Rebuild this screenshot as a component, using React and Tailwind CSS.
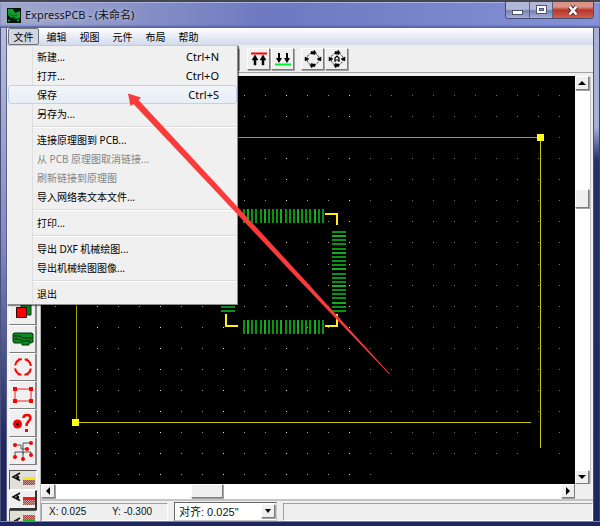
import React from "react";

const uiFont = "font-['Noto_Sans','Noto_Sans_CJK_SC',sans-serif]";

const menuNames = ["编辑", "视图", "元件", "布局", "帮助"];

const fileMenu = [
  { label: "新建...", keys: "Ctrl+N" },
  { label: "打开...", keys: "Ctrl+O" },
  { label: "保存", keys: "Ctrl+S", active: true },
  { label: "另存为..." },
  null,
  { label: "连接原理图到 PCB..." },
  { label: "从 PCB 原理图取消链接...", disabled: true },
  { label: "刷新链接到原理图", disabled: true },
  { label: "导入网络表文本文件..." },
  null,
  { label: "打印..." },
  null,
  { label: "导出 DXF 机械绘图..." },
  { label: "导出机械绘图图像..." },
  null,
  { label: "退出" },
];

function TitleBar() {
  return (
    <header className="flex h-7 shrink-0 items-start justify-between border-t-2 border-[#45464e] bg-linear-to-r from-[#a3a9cc] via-[#6d79c0] via-45% to-[#8592d6] pl-[7px] shadow-[inset_0_1px_0_#a9b2de,inset_0_-2px_2px_#5662a8]">
      <div className="flex items-center gap-1 pt-[5px]">
        <svg width="14" height="15" viewBox="0 0 14 15" aria-hidden="true">
          <rect width="14" height="15" fill="#04150a" />
          <path d="M1 1h5l2 4 5-2v7l-4 1-2-2-3 1-3-3z" fill="#12a02c" />
          <path d="M2 5l4 3 4-1M3 9l4 2h6" stroke="#0a5c1b" fill="none" />
          <circle cx="2" cy="12.500" r="1" fill="#18b636" />
          <circle cx="11" cy="12.500" r="1" fill="#18b636" />
        </svg>
        <h1 className="text-[11px] leading-4 text-[#10101c] [text-shadow:0_0_5px_#ffffffb0]">
          ExpressPCB - (未命名)
        </h1>
      </div>
      <div className="mr-[6px] flex h-[17px] overflow-hidden rounded-b border border-t-0 border-[#474c72]">
        <button aria-label="最小化" className="flex w-6 items-center justify-center border-r border-[#5a608c] bg-linear-to-b from-[#b2b7d8] from-45% via-[#7a81ae] via-55% to-[#a4addb]">
          <svg width="11" height="12"><rect x="0.5" y="6.5" width="10" height="4" fill="#fff" stroke="#50546e" /></svg>
        </button>
        <button aria-label="最大化" className="flex w-[23px] items-center justify-center border-r border-[#5a608c] bg-linear-to-b from-[#b2b7d8] from-45% via-[#7a81ae] via-55% to-[#a4addb]">
          <svg width="11" height="10"><rect x="0.5" y="0.5" width="10" height="8" fill="#fff" stroke="#50546e" /><rect x="3.5" y="3.5" width="4" height="2" fill="#8d93b8" stroke="#50546e" /></svg>
        </button>
        <button aria-label="关闭" className="flex w-10 items-center justify-center bg-linear-to-b from-[#d99488] from-30% via-[#b5352a] via-50% to-[#d0604c]">
          <svg width="12" height="11" viewBox="0 0 12 11"><path d="M2.5 1.5l7 8M9.500 1.500l-7 8" stroke="#5b3038" strokeWidth="4.500" /><path d="M2.500 1.500l7 8M9.500 1.500l-7 8" stroke="#fff" strokeWidth="2.500" /></svg>
        </button>
      </div>
    </header>
  );
}

function FileMenu() {
  return (
    <div role="menu" className="absolute top-[17px] left-0 z-20 w-[231px] border border-[#8d8d8d] border-t-[#c9c9c9] border-l-[#f4f4f4] bg-[#f0f0f0] py-px shadow-[1px_1px_1px_#00000070]">
      <div className="absolute inset-y-px left-6 w-px bg-[#dfdfe2]" />
      {fileMenu.map((item, i) =>
        item === null ? (
          <div key={i} role="separator" className="flex h-[7px] items-center pl-6">
            <div className="h-[2px] w-full border-b border-white bg-[#dcdcdc]" />
          </div>
        ) : (
          <button
            key={i}
            role="menuitem"
            disabled={item.disabled}
            className={
              "relative flex h-[19px] w-full items-center justify-between border pr-[17px] pl-7 text-[10px] leading-4 " +
              (item.active
                ? "rounded-[3px] border-[#b9d4ee] bg-linear-to-b from-[#f2f5f9] to-[#e6eef7] text-black"
                : item.disabled
                  ? "border-transparent text-[#858585]"
                  : "border-transparent text-black")
            }
          >
            <span>{item.label}</span>
            {item.keys && <span className="text-[11px]">{item.keys}</span>}
          </button>
        ),
      )}
    </div>
  );
}

function MenuBar() {
  return (
    <nav className="relative flex h-[17px] shrink-0 bg-linear-to-b from-white to-[#d2daec] text-[10px] leading-4 text-black">
      <button className="mx-px w-[31px] rounded-[2px] border border-[#6f737c] bg-[#d3d6dc] leading-[14px]">文件</button>
      {menuNames.map((name) => (
        <button key={name} className="w-[33px]">{name}</button>
      ))}
      <FileMenu />
    </nav>
  );
}

const raised = "border border-white border-r-[#7d7d7d] border-b-[#7d7d7d] bg-[#efefef] shadow-[1px_1px_0_#a5a5a5]";

function ToolButton({ label, children }) {
  return (
    <button aria-label={label} className={"flex h-[22px] w-[23px] items-center justify-center " + raised}>
      {children}
    </button>
  );
}

function Target({ auto }) {
  return (
    <svg width="18" height="18" viewBox="0 0 18 18" aria-hidden="true">
      <circle cx="9" cy="9" r="6" fill="none" stroke="#222" strokeDasharray="2 1" />
      <path d="M7 1.500h3V0l2 2.500L10 5V4H7zM11 16.500H8V18l-2-2.500L8 13v1h3zM1 7l4 2-4 2zM17 7l-4 2 4 2z" fill="#000" stroke="#000" strokeWidth="0.500" />
      {auto && <path d="M7 12V8l2-2 2 2v4M7 10h4" fill="none" stroke="#000" strokeWidth="1.200" />}
    </svg>
  );
}

function ToolBar() {
  return (
    <div className="flex h-7 shrink-0 items-start border-b border-[#a2a2a2] bg-[#efefef] pt-[3px]">
      <div className={"mr-2 ml-2 h-[22px] w-[224px] " + raised} />
      <div className="flex gap-px">
        <ToolButton label="顶层">
          <svg width="16" height="14"><path d="M0 1.500h16" stroke="#f00" strokeWidth="2" /><path d="M1 8l3-5 3 5H5v5H3V8zM9 8l3-5 3 5h-2v5h-2V8z" fill="#000" stroke="#000" strokeWidth="0.500" /></svg>
        </ToolButton>
        <ToolButton label="底层">
          <svg width="16" height="14"><path d="M0 12.500h16" stroke="#00f22a" strokeWidth="2" /><path d="M1 6l3 5 3-5H5V1H3v5zM9 6l3 5 3-5h-2V1h-2v5z" fill="#000" /></svg>
        </ToolButton>
      </div>
      <div className="ml-[7px] flex gap-px">
        <ToolButton label="旋转"><Target /></ToolButton>
        <ToolButton label="自动旋转"><Target auto /></ToolButton>
      </div>
    </div>
  );
}

const sideTools = [
  ["焊盘", <svg key="a" width="22" height="24" viewBox="0 0 22 24"><path d="M9 4h10v12H9z" fill="#078018" stroke="#042" /><path d="M4.500 8.500h10v10h-10z" fill="#f00" stroke="#300" /></svg>],
  ["覆铜", <svg key="b" width="22" height="14" viewBox="0 0 22 14"><path d="M2 1h18l1 1v8l-2 1h-2v2h-7v-2H2l-1-2V2z" fill="#0a8a1d" stroke="#052e0a" /><path d="M2 4h6l2 2h10M2 7h5l3 2h9" fill="none" stroke="#052e0a" /></svg>],
  ["圆弧", <svg key="c" width="20" height="20" viewBox="0 0 20 20"><circle cx="10" cy="10" r="8" fill="none" stroke="#f00" strokeWidth="2" strokeDasharray="9.566 3" strokeDashoffset="-1.500" /><path d="M6 1l-2 4M14 1l2 4M6 19l-2-4M14 19l2-4" stroke="#f00" strokeWidth="0.700" /></svg>],
  ["矩形", <svg key="d" width="22" height="18" viewBox="0 0 22 18"><path d="M3 3h16v12H3z" fill="none" stroke="#e22" /><path d="M1 1h4v4H1zM17 1h4v4h-4zM1 13h4v4H1zM17 13h4v4h-4z" fill="#f00" /></svg>],
  ["信息", <svg key="e" width="22" height="20" viewBox="0 0 22 20"><circle cx="5.500" cy="11" r="4.500" fill="#f00" /><circle cx="5.500" cy="11" r="1.500" fill="#000" /><path d="M11.500 5c0-4 7-4 7 0 0 3-4 3-4 8" fill="none" stroke="#f00" strokeWidth="2.500" /><rect x="13" y="16" width="3" height="3" fill="#f00" /></svg>],
  ["网络", <svg key="f" width="22" height="22" viewBox="0 0 22 22"><path d="M3 5h6v4h6M11 14V3h8M3 16v-4h16v3M11 12v7" fill="none" stroke="#555" /><g fill="#f00"><circle cx="3" cy="5" r="2" /><circle cx="19" cy="3" r="2" /><circle cx="15" cy="9" r="2" /><circle cx="3" cy="17" r="2" /><circle cx="19" cy="15" r="2" /><circle cx="11" cy="19" r="2" /></g></svg>],
];

function Eye() {
  return (
    <g>
      <path d="M9 1L2 5l7 3.500" fill="none" stroke="#111" strokeWidth="1.500" />
      <path d="M6 2.500l2.500 2.500L7 8 5 6z" fill="#111" />
    </g>
  );
}

function Hatch({ y, color }) {
  return (
    <g>
      <rect x="12" y={y} width="12" height="5" fill={color} fillOpacity="0.450" />
      <path d={"M12 " + (y + 0.5) + "h12m-12 2h12m-12 2h12"} stroke={color} strokeDasharray="1 1" />
      <path d={"M13 " + (y + 1.5) + "h11m-11 2h11"} stroke={color} strokeDasharray="1 1" />
    </g>
  );
}

function SideBar() {
  return (
    <aside className="flex w-[34px] shrink-0 flex-col overflow-hidden border-r border-[#b5b5b5] bg-[#efefef] pt-[221px] pl-[2px]">
      {sideTools.map(([name, icon]) => (
        <button key={name} aria-label={name} className="flex h-7 w-7 shrink-0 items-center justify-center border border-white border-r-2 border-r-[#8a8a8a] border-b-[#7d7d7d]">
          {icon}
        </button>
      ))}
      <button aria-label="丝印层" className="mt-[5px] flex h-5 w-7 shrink-0 items-center justify-center border border-t-[#555] border-r-white border-b-white border-l-[#555] bg-[#e0dfd8]">
        <svg width="24" height="16"><Eye /><rect x="12" y="5" width="12" height="3" fill="#f5e614" /><Hatch y={8} color="#a84038" /></svg>
      </button>
      <button aria-label="顶层铜" className="flex h-5 w-7 shrink-0 items-center justify-center border border-white border-r-2 border-r-[#333] border-b-2 border-b-[#333]">
        <svg width="24" height="16"><Eye /><rect x="12" y="5" width="12" height="3" fill="#f01818" /><Hatch y={8} color="#a84038" /></svg>
      </button>
      <button aria-label="底层铜" className="flex h-5 w-7 shrink-0 items-center justify-center border border-t-[#555] border-r-white border-b-white border-l-[#555] bg-[#e0dfd8]">
        <svg width="24" height="18"><g transform="translate(0 6)"><Eye /></g><Hatch y={4} color="#a84038" /><rect x="12" y="9" width="12" height="3" fill="#12b822" /></svg>
      </button>
    </aside>
  );
}

const steps = Array.from({ length: 20 }, (_, i) => i);
const dots = [];
for (let row = 0; row < 19; row++) {
  for (let col = 0; col < 25; col++) {
    if (row === 18 && col > 15) continue;
    if (row > 15 && col === 23) continue;
    dots.push([14 + col * 21, Math.round(19 + row * 21.07), col]);
  }
}

function Board() {
  return (
    <svg className="block h-full w-full" shapeRendering="crispEdges" role="img" aria-label="PCB">
      {dots.map(([x, y, col]) => (
        <rect key={x + "-" + y} x={x} y={y} width="1" height="1" fill={col > 14 ? "#777777" : col % 3 === 2 ? "#e0e0e0" : "#9a9a9a"} />
      ))}
      <path d="M35.500 346V61.500H499" fill="none" stroke="#a3a300" />
      <path d="M35 346.500H490M499.500 61V372" fill="none" stroke="#c8c800" />
      <rect x="496" y="58" width="7" height="7" fill="#ffff1c" />
      <rect x="31" y="343" width="7" height="7" fill="#ffff1c" />
      {steps.map((i) => {
        const p = Math.round(i * 4.150);
        const fill = i % 4 === 1 ? "#12b01a" : "#08940f";
        return (
          <g key={i} fill={fill}>
            <rect x={202 + p} y="133" width="2" height="14" />
            <rect x={202 + p} y="244" width="2" height="14" />
            <rect x="291" y={155 + p} width="14" height="2" />
            <rect x="180" y={155 + p} width="14" height="2" />
          </g>
        );
      })}
      <path d="M284 138h12v11M284 250h12v-12M197 250h-12v-12" fill="none" stroke="#ffee1a" strokeWidth="2" />
    </svg>
  );
}

const glyphs = {
  up: "M4 1l4 4H0z",
  down: "M0 1h8L4 5z",
  left: "M2 3l4-4v8z",
  right: "M6 3L2-1v8z",
};

function ArrowButton({ dir, label }) {
  return (
    <button aria-label={label} className={"flex h-[14px] w-[14px] shrink-0 items-center justify-center " + raised}>
      <svg width="8" height="6" overflow="visible"><path d={glyphs[dir]} fill="#000" /></svg>
    </button>
  );
}

function Workspace() {
  return (
    <div className="grid min-h-0 flex-1 grid-cols-[minmax(0,1fr)_18px] grid-rows-[minmax(0,1fr)_15px]">
      <div className="overflow-hidden bg-black">
        <Board />
      </div>
      <div className="mr-[2px] flex flex-col items-start border-r border-[#c4c4c4] bg-white">
        <ArrowButton dir="up" label="向上滚动" />
        <div className="flex-[99]" />
        <div className={"h-[19px] w-[14px] shrink-0 " + raised} />
        <div className="flex-[262]" />
        <ArrowButton dir="down" label="向下滚动" />
      </div>
      <div className="flex items-start bg-white">
        <ArrowButton dir="left" label="向左滚动" />
        <div className="flex-[136]" />
        <div className={"h-[14px] w-8 shrink-0 " + raised} />
        <div className="flex-[338]" />
        <ArrowButton dir="right" label="向右滚动" />
      </div>
      <div className="bg-[#efefef]" />
    </div>
  );
}

const statusPanel = "h-[18px] border border-t-[#a0a0a0] border-r-white border-b-white border-l-[#a0a0a0]";

function StatusBar() {
  return (
    <footer className="flex h-[22px] shrink-0 items-end gap-[6px] border-t-2 border-[#c4c4c4] bg-[#efefef] font-['Liberation_Sans','Noto_Sans_CJK_SC',sans-serif] text-[10px] leading-4 text-[#111]">
      <div className={"flex w-[127px] shrink-0 pl-[7px] " + statusPanel}>
        <span className="w-[63px]">X: 0.025</span>
        <span>Y: -0.300</span>
      </div>
      <div className="relative h-[19px] w-[103px] shrink-0">
        <select aria-label="对齐" className="block h-full w-full appearance-none rounded-none border border-t-[#666] border-r-[#ccc] border-b-[#ccc] border-l-[#666] bg-white pl-1 text-[11px] leading-4">
          <option>对齐: 0.025"</option>
        </select>
        <span className={"pointer-events-none absolute top-[2px] right-[2px] flex h-[14px] w-[14px] items-center justify-center " + raised}>
          <svg width="6" height="4"><path d="M0 0h6L3 4z" fill="#000" /></svg>
        </span>
      </div>
      <div className={"flex-1 " + statusPanel} />
    </footer>
  );
}

export default function App() {
  return (
    <div className={"relative flex h-screen flex-col overflow-hidden bg-[#1e2660] " + uiFont}>
      <TitleBar />
      <div className="flex min-h-0 flex-1">
        <div className="w-[7px] shrink-0 border-r border-l border-r-[#5b6084] border-l-[#4a4f78] bg-linear-to-b from-[#b9bedb] via-[#7c88c6] via-45% to-[#1e2660] to-85%" />
        <main className="flex min-w-0 flex-1 flex-col bg-[#efefef]">
          <MenuBar />
          <ToolBar />
          <div className="flex min-h-0 flex-1 pt-[3px]">
            <SideBar />
            <div className="flex min-w-0 flex-1 flex-col">
              <Workspace />
              <StatusBar />
            </div>
          </div>
        </main>
        <div className="w-[7px] shrink-0 border-r border-l border-r-[#3a3f66] border-l-[#4a4f78] bg-linear-to-b from-[#a9b0d8] from-20% via-[#262e6c] via-27% to-[#1e2660]" />
      </div>
      <div className="h-[5px] shrink-0 border-t border-[#7a80a6] bg-[#1e2660]" />
      <svg className="pointer-events-none absolute top-0 left-0 z-30" width="400" height="380" aria-hidden="true">
        <path d="M128 93.500l13 4-2.500 2.500L222 190l80 87 88 97h-1l-91-95-83.500-89L133.500 104l-3 2z" fill="#fb3a3a" />
      </svg>
    </div>
  );
}
